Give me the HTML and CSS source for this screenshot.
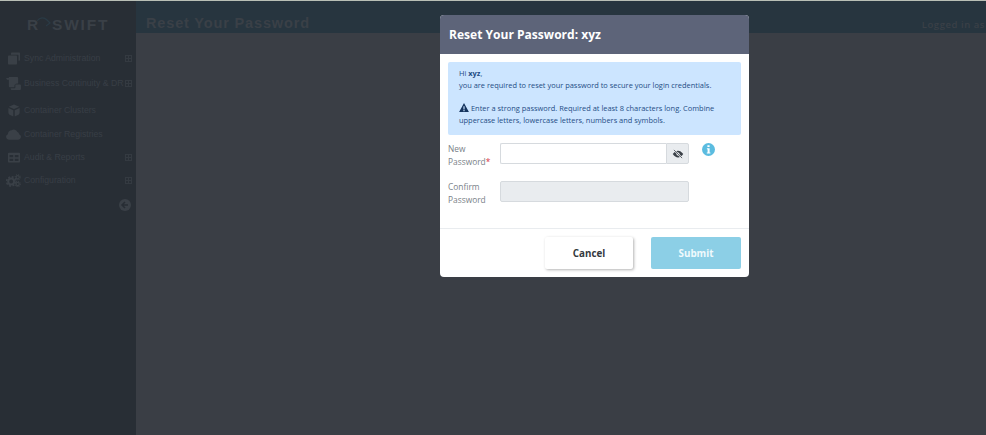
FILE: index.html
```html
<!DOCTYPE html>
<html lang="en">
<head>
<meta charset="utf-8">
<title>Reset Your Password</title>
<link rel="stylesheet" href="styles.css">
</head>
<body>
<div class="topline"></div>
<div class="app">
  <aside class="sidebar">
    <div class="logo"><span class="logo-r">R</span><svg class="logo-mark" viewBox="0 0 16 12" width="16" height="12"><path d="M1 4C4 0 8 0 11 3M10 9l4-3-3-3" fill="none" stroke="#2a3a45" stroke-width="1.200"/></svg><span class="logo-rest">SWIFT</span></div>
    <nav class="nav">
      <div class="nav-item i1">
        <svg class="nav-icon" viewBox="0 0 16 16"><path d="M5 0h10a1 1 0 0 1 1 1v9a1 1 0 0 1-1 1h-1V4a1 1 0 0 0-1-1H4V1a1 1 0 0 1 1-1zM1 4h10a1 1 0 0 1 1 1v10a1 1 0 0 1-1 1H1a1 1 0 0 1-1-1V5a1 1 0 0 1 1-1z"/></svg>
        <span class="nav-label">Sync Administration</span>
        <span class="plus"></span>
      </div>
      <div class="nav-item i2">
        <svg class="nav-icon wide" viewBox="0 0 16 14"><path d="M0 1h3v2H1zM3 0h9a1 1 0 0 1 1 1v6h-1a3 3 0 0 0-3 3v1H4a1 1 0 0 1-1-1zM10 8h5a1 1 0 0 1 1 1v4a1 1 0 0 1-1 1H6a1 1 0 0 1-1-1v-1h4a1 1 0 0 0 1-1z"/></svg>
        <span class="nav-label">Business Continuity &amp; DR</span>
        <span class="plus"></span>
      </div>
      <div class="nav-item i3">
        <svg class="nav-icon" viewBox="0 0 16 16"><path d="M8 0l7 3-7 3-7-3zM0.500 4.500L7 7.500V16L2 13.500A3 3 0 0 1 .5 11zM15.500 4.500V11a3 3 0 0 1-1.500 2.500L9 16V7.500z"/></svg>
        <span class="nav-label">Container Clusters</span>
      </div>
      <div class="nav-item i4">
        <svg class="nav-icon wide" viewBox="0 0 16 11"><path d="M3 11a3 3 0 0 1-1-5.800A4 4 0 0 1 6 1a4 4 0 0 1 6 1.500A3 3 0 0 1 14 5.200 3 3 0 0 1 13 11z"/></svg>
        <span class="nav-label">Container Registries</span>
      </div>
      <div class="nav-item i5">
        <svg class="nav-icon" viewBox="0 0 16 13"><path fill-rule="evenodd" d="M1 0h14a1 1 0 0 1 1 1v11a1 1 0 0 1-1 1H1a1 1 0 0 1-1-1V1a1 1 0 0 1 1-1zM2 3v3h5V3zM9 3v3h5V3zM2 8v3h5V8zM9 8v3h5V8z"/></svg>
        <span class="nav-label">Audit &amp; Reports</span>
        <span class="plus"></span>
      </div>
      <div class="nav-item i6">
        <svg class="nav-icon wide gear" viewBox="0 0 16 14"><circle cx="5.500" cy="8" r="3.200" fill="none" stroke="#3a4047" stroke-width="2.200"/><circle cx="5.500" cy="8" r="4.900" fill="none" stroke="#3a4047" stroke-width="1.800" stroke-dasharray="2.100 1.750"/><circle cx="12.500" cy="3.500" r="1.700" fill="none" stroke="#3a4047" stroke-width="1.300"/><circle cx="12.500" cy="3.500" r="2.800" fill="none" stroke="#3a4047" stroke-width="1.100" stroke-dasharray="1.200 1"/><circle cx="12.500" cy="10.800" r="1.700" fill="none" stroke="#3a4047" stroke-width="1.300"/><circle cx="12.500" cy="10.800" r="2.800" fill="none" stroke="#3a4047" stroke-width="1.100" stroke-dasharray="1.200 1"/></svg>
        <span class="nav-label">Configuration</span>
        <span class="plus"></span>
      </div>
    </nav>
    <div class="collapse"><svg viewBox="0 0 12 12" width="12" height="12"><circle cx="6" cy="6" r="6" fill="#3a4047"/><path d="M9 6H3.500M6 3L3 6l3 3" fill="none" stroke="#272d34" stroke-width="1.500"/></svg></div>
  </aside>
  <main class="main">
    <header class="header">
      <h1 class="title">Reset Your Password</h1>
      <span class="logged">Logged in as</span>
    </header>
  </main>
</div>

<section class="modal">
  <div class="modal-head">Reset Your Password: xyz</div>
  <div class="modal-body">
    <div class="notice">
      <p>Hi <b>xyz</b>,<br>you are required to reset your password to secure your login credentials.</p>
      <p class="gap"><svg class="warn" viewBox="0 0 12 11" width="10" height="9"><path fill-rule="evenodd" d="M6 0l6 11H0zM5.300 4v4h1.400V4zM5.300 8.700v1.300h1.400V8.700z"/></svg> Enter a strong password. Required at least 8 characters long. Combine uppercase letters, lowercase letters, numbers and symbols.</p>
    </div>
    <div class="row">
      <label class="lbl">New Password<span class="req">*</span></label>
      <div class="group">
        <input class="input" type="password" aria-label="New Password">
        <span class="addon"><svg viewBox="0 0 16 12" width="12" height="10"><path d="M1 6c2-3 4.500-4.500 7-4.500S13 3 15 6c-2 3-4.500 4.500-7 4.500S3 9 1 6z" fill="#3b4148"/><circle cx="8" cy="6" r="2" fill="#e9ecef"/><path d="M2.500 .5l11 11" stroke="#e9ecef" stroke-width="2.200"/><path d="M2.500 .5l11 11" stroke="#3b4148" stroke-width="1"/></svg></span>
      </div>
      <svg class="info" viewBox="0 0 13 13" width="13" height="13"><circle cx="6.500" cy="6.500" r="6.500" fill="#5bbce0"/><path d="M5.400 2.200h2.200v1.800H5.400zM4.900 5.200h2.700v4.200h.8v1.100H4.800V9.400h.8V6.300h-.7z" fill="#fff"/></svg>
    </div>
    <div class="row row2">
      <label class="lbl">Confirm Password</label>
      <input class="input disabled" type="password" disabled aria-label="Confirm Password">
    </div>
  </div>
  <div class="modal-foot">
    <button class="btn cancel" type="button">Cancel</button>
    <button class="btn submit" type="button">Submit</button>
  </div>
</section>
</body>
</html>
```

FILE: styles.css
```css
* { box-sizing: border-box; }
html, body { margin: 0; height: 100%; overflow: hidden; }
body { background: #3a3e45; font-family: "Open Sans", sans-serif; display: flex; flex-direction: column; }
.topline { height: 1px; background: #b9bfb6; flex: none; }
.app { flex: 1; display: flex; min-height: 0; }
.sidebar { width: 136px; flex: none; background: #282e35; position: relative; font-family: "Liberation Sans", sans-serif; }
.logo { height: 46px; padding: 15px 0 0 27px; display: flex; align-items: flex-start; color: #3a4047; font-weight: 700; font-size: 15.500px; line-height: 17px; letter-spacing: 1.800px; }
.logo-r { width: 11px; }
.logo-mark { margin: 1px 0 0 -2px; width: 16px; flex: none; }
.logo-rest { margin-left: 0; }
.nav { display: block; color: #383e46; font-size: 8.700px; }
.nav-item { display: flex; align-items: center; height: 16px; position: relative; padding-left: 8px; }
.i1 { margin-top: 3px; }
.i2 { margin-top: 9px; }
.i3 { margin-top: 11px; }
.i4 { margin-top: 8px; }
.i5 { margin-top: 7px; }
.i6 { margin-top: 7px; }
.nav-icon { width: 12px; height: 13px; fill: #3a4047; flex: none; margin-right: 4px; }
.nav-icon.wide { width: 15px; margin-left: -2px; margin-right: 3px; }
.nav-label { white-space: nowrap; }
.plus { position: absolute; left: 125px; top: 5px; width: 7px; height: 7px; border: 1px solid #343a41; background: linear-gradient(#343a41, #343a41) center / 5px 1px no-repeat, linear-gradient(#343a41, #343a41) center / 1px 5px no-repeat; }
.collapse { position: absolute; left: 119px; top: 198px; line-height: 0; }
.main { flex: 1; min-width: 0; }
.header { height: 32px; background: #27353f; display: flex; justify-content: space-between; position: relative; }
.title { margin: 0; padding: 14px 0 0 10px; height: 32px; font: 700 14.500px/16px "Liberation Sans", sans-serif; letter-spacing: .850px; color: #3a4047; white-space: nowrap; }
.logged { position: absolute; right: 1px; top: 18px; font-size: 9.500px; line-height: 12px; font-weight: 600; letter-spacing: .55px; color: #3a4047; white-space: nowrap; }
.modal { position: absolute; left: 440px; top: 15px; width: 309px; height: 262px; background: #fff; border-radius: 4px; overflow: hidden; display: flex; flex-direction: column; }
.modal-head { height: 39px; flex: none; background: #5d6479; color: #fff; font-weight: 700; font-size: 12.050px; line-height: 39px; padding-left: 9px; }
.modal-body { flex: 1; padding: 8px 8px 0; }
.notice { height: 73px; background: #cce5ff; border-radius: 2px; padding: 6px 11px; color: #1f4d85; font-size: 7.450px; line-height: 11.700px; }
.notice p { margin: 0; }
.notice .gap { margin-top: 11.700px; }
.notice b { font-weight: 700; }
.warn { fill: #16355f; vertical-align: -1px; }
.row { display: flex; align-items: flex-start; margin-top: 8px; }
.row2 { margin-top: 13px; }
.lbl { width: 52px; flex: none; font-size: 8.400px; line-height: 12.600px; color: #7a8188; }
.req { color: #d9333f; }
.group { display: flex; width: 189px; height: 21px; }
.input { display: block; height: 21px; border: 1px solid #d6dade; border-radius: 2px; background: #fff; padding: 0; margin: 0; outline: 0; }
.group .input { flex: 1; min-width: 0; border-radius: 2px 0 0 2px; border-right: 0; }
.addon { width: 23px; flex: none; background: #e9ecef; border: 1px solid #d6dade; border-radius: 0 2px 2px 0; display: flex; align-items: center; justify-content: center; }
.info { margin: 0 0 0 13px; }
.disabled { width: 189px; background: #e9ecef; }
.modal-foot { height: 49px; flex: none; border-top: 1px solid #e9ecef; display: flex; justify-content: flex-end; gap: 18px; padding: 8px 8px 0; }
.btn { height: 32px; border: 0; border-radius: 2px; font: 700 9.800px "Open Sans", sans-serif; padding: 0; }
.cancel { width: 88px; background: #fff; color: #343a40; box-shadow: 1px 1px 3px rgba(0,0,0,.3); }
.submit { width: 90px; background: #8ccfe6; color: #f0fafd; }
```
